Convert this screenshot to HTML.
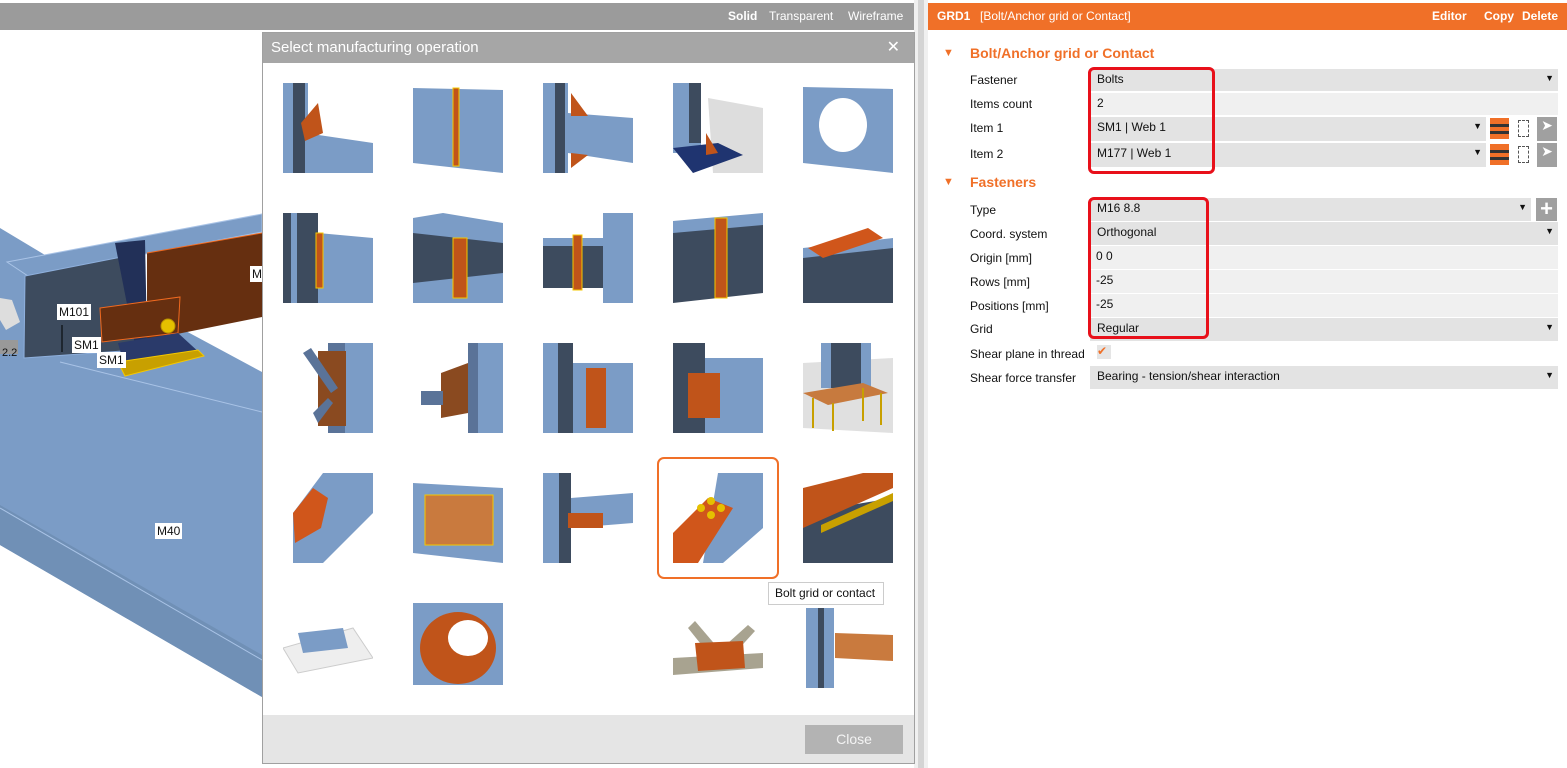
<!DOCTYPE html>
<html><head><meta charset="utf-8"><style>
*{margin:0;padding:0;box-sizing:border-box}
body{width:1567px;height:768px;overflow:hidden;background:#fff;font-family:"Segoe UI","Liberation Sans",sans-serif;font-size:12px;color:#111;position:relative}
.abs{position:absolute}
.topbar{left:0;top:3px;width:914px;height:27px;background:#9b9b9b;color:#fff}
.topbar span{position:absolute;top:6px;font-size:12px}
.dlg{left:262px;top:32px;width:653px;height:732px;background:#fff;border:1px solid #a0a0a0}
.dh{left:0;top:0;width:651px;height:30px;background:#a6a6a6;color:#fff;font-size:15px;padding:6px 8px}
.cell{position:absolute;width:90px;height:90px}
.lbl{position:absolute;background:#fff;font-family:"Liberation Sans",sans-serif;font-size:12px;padding:1px 2px;line-height:14px}
.rp{left:928px;top:0;width:639px;height:768px;background:#fff}
.row{position:absolute;left:970px;font-size:12px}
.fld{position:absolute;left:1090px;height:22px;background:#e3e3e3;padding:3px 7px;font-size:12px}
.dd::after{content:"▼";position:absolute;right:4px;top:4px;font-size:9px}
</style></head><body>
<!-- 3D view left -->
<svg class="abs" style="left:0;top:0" width="262" height="768">
<polygon points="0,228 50,258 262,372 262,697 0,545" fill="#7b9cc6"/>
<polygon points="0,505 262,655 262,697 0,545" fill="#7090b6"/>
<line x1="0" y1="508" x2="262" y2="660" stroke="#a9c3e6" stroke-width="1"/>
<line x1="60" y1="362" x2="262" y2="412" stroke="#a9c3e6" stroke-width="1"/>
<polygon points="7,262 262,214 262,232 28,276" fill="#7b9cc6" stroke="#a9c3e6"/>
<polygon points="25,276 137,254 137,350 24,358" fill="#3d4b5e" stroke="#8fb0dd"/>
<polygon points="115,243 145,240 147,340 135,345" fill="#223058"/>
<polygon points="147,253 262,233 262,317 177,334 147,340" fill="#662f10"/>
<line x1="147" y1="253" x2="262" y2="233" stroke="#f06a20"/>
<polygon points="100,308 180,297 178,333 102,342" fill="#662f10" stroke="#f06a20"/>
<polygon points="118,343 178,333 202,355 125,368" fill="#2a3a6a"/>
<polygon points="118,362 198,350 204,356 125,376" fill="#c8a000" stroke="#f5c800"/>
<circle cx="168" cy="326" r="7" fill="#e5c000" stroke="#b89000"/>
<polygon points="0,298 12,300 20,322 6,330 0,320" fill="#ddd"/>
<rect x="0" y="340" width="18" height="14" fill="#999"/>
<line x1="62" y1="325" x2="62" y2="352" stroke="#000"/>
</svg>
<div class="lbl" style="left:57px;top:304px">M101</div>
<div class="lbl" style="left:72px;top:337px">SM1</div>
<div class="lbl" style="left:97px;top:352px">SM1</div>
<div class="lbl" style="left:155px;top:523px">M40</div>
<div class="lbl" style="left:250px;top:266px">M</div>
<div class="abs" style="left:2px;top:347px;font-size:11px">2.2</div>

<div class="abs topbar"><span style="left:728px;font-weight:bold">Solid</span><span style="left:769px">Transparent</span><span style="left:848px">Wireframe</span></div>
<div class="abs" style="left:914px;top:0;width:14px;height:768px;background:#d4d4d4;border-left:4px solid #f0f0f0;border-right:4px solid #f0f0f0"></div>

<!-- dialog -->
<div class="abs dlg">
<div class="abs dh">Select manufacturing operation<span style="position:absolute;right:14px;top:4px;font-size:16px">✕</span></div>
<div class="abs" style="left:0;top:682px;width:651px;height:48px;background:#e5e5e5"></div>
<div class="abs" style="left:542px;top:692px;width:98px;height:29px;background:#b3b3b3;color:#f4f4f4;font-size:14px;text-align:center;line-height:29px">Close</div>
</div>
<div class="abs" style="left:657px;top:457px;width:122px;height:122px;border:2px solid #f07028;border-radius:7px"></div>
<div class="abs" style="left:768px;top:582px;width:116px;height:23px;border:1px solid #ccc;background:#fff;font-size:12px;padding:3px 6px">Bolt grid or contact</div>

<!-- thumbnails -->
<svg class="cell" style="left:283px;top:83px" viewBox="0 0 90 90"><rect x="0" y="0" width="25" height="90" fill="#7b9cc6"/><rect x="10" y="0" width="12" height="90" fill="#3d4b5e"/><polygon points="22,50 90,60 90,90 22,90" fill="#7b9cc6"/><polygon points="18,40 35,20 40,50 22,58" fill="#c0541a"/></svg>
<svg class="cell" style="left:413px;top:83px" viewBox="0 0 90 90"><polygon points="0,5 90,7 90,90 0,80" fill="#7b9cc6"/><rect x="40" y="5" width="6" height="78" fill="#c0541a" stroke="#f5c800"/></svg>
<svg class="cell" style="left:543px;top:83px" viewBox="0 0 90 90"><rect x="0" y="0" width="25" height="90" fill="#7b9cc6"/><rect x="12" y="0" width="10" height="90" fill="#3d4b5e"/><polygon points="25,30 90,35 90,80 25,70" fill="#7b9cc6"/><polygon points="28,10 45,33 28,33" fill="#c0541a"/><polygon points="28,70 45,72 28,85" fill="#c0541a"/></svg>
<svg class="cell" style="left:673px;top:83px" viewBox="0 0 90 90"><polygon points="35,15 90,25 90,90 40,90" fill="#ddd"/><rect x="0" y="0" width="28" height="70" fill="#7b9cc6"/><rect x="16" y="0" width="12" height="60" fill="#3d4b5e"/><polygon points="0,65 45,60 70,72 20,90" fill="#1f3470"/><polygon points="33,50 33,72 45,70" fill="#c0541a"/></svg>
<svg class="cell" style="left:803px;top:83px" viewBox="0 0 90 90"><polygon points="0,4 90,6 90,90 0,80" fill="#7b9cc6"/><ellipse cx="40" cy="42" rx="24" ry="27" fill="#fff"/></svg>

<svg class="cell" style="left:283px;top:213px" viewBox="0 0 90 90"><rect x="0" y="0" width="35" height="90" fill="#3d4b5e"/><rect x="8" y="0" width="6" height="90" fill="#7b9cc6"/><polygon points="35,20 90,25 90,90 35,90" fill="#7b9cc6"/><rect x="33" y="20" width="7" height="55" fill="#c0541a" stroke="#f5c800"/></svg>
<svg class="cell" style="left:413px;top:213px" viewBox="0 0 90 90"><polygon points="0,15 90,10 90,90 0,90" fill="#3d4b5e"/><polygon points="0,5 30,0 90,10 90,30 0,20" fill="#7b9cc6"/><polygon points="0,70 90,60 90,90 0,90" fill="#7b9cc6"/><rect x="40" y="25" width="14" height="60" fill="#c0541a" stroke="#f5c800"/></svg>
<svg class="cell" style="left:543px;top:213px" viewBox="0 0 90 90"><rect x="0" y="25" width="90" height="50" fill="#3d4b5e"/><rect x="0" y="25" width="90" height="8" fill="#7b9cc6"/><rect x="60" y="0" width="30" height="90" fill="#7b9cc6"/><rect x="30" y="22" width="9" height="55" fill="#c0541a" stroke="#f5c800"/></svg>
<svg class="cell" style="left:673px;top:213px" viewBox="0 0 90 90"><polygon points="0,15 90,8 90,80 0,90" fill="#3d4b5e"/><polygon points="0,8 90,0 90,12 0,20" fill="#7b9cc6"/><rect x="42" y="5" width="12" height="80" fill="#c0541a" stroke="#f5c800"/></svg>
<svg class="cell" style="left:803px;top:213px" viewBox="0 0 90 90"><polygon points="0,40 90,30 90,90 0,90" fill="#3d4b5e"/><polygon points="0,35 90,25 90,35 0,45" fill="#7b9cc6"/><polygon points="5,35 65,15 80,25 20,45" fill="#d0561b"/></svg>

<svg class="cell" style="left:283px;top:343px" viewBox="0 0 90 90"><rect x="45" y="0" width="45" height="90" fill="#5a7398"/><rect x="62" y="0" width="28" height="90" fill="#7b9cc6"/><rect x="35" y="8" width="28" height="75" fill="#8a4a20"/><polygon points="20,10 28,5 55,45 48,50" fill="#5a7398"/><polygon points="30,70 45,55 50,60 35,80" fill="#5a7398"/></svg>
<svg class="cell" style="left:413px;top:343px" viewBox="0 0 90 90"><rect x="55" y="0" width="35" height="90" fill="#5a7398"/><rect x="65" y="0" width="25" height="90" fill="#7b9cc6"/><polygon points="28,30 55,20 55,70 28,75" fill="#8a4a20"/><rect x="8" y="48" width="22" height="14" fill="#5a7398"/></svg>
<svg class="cell" style="left:543px;top:343px" viewBox="0 0 90 90"><rect x="0" y="0" width="20" height="90" fill="#7b9cc6"/><rect x="15" y="0" width="15" height="90" fill="#3d4b5e"/><rect x="30" y="20" width="60" height="70" fill="#7b9cc6"/><rect x="43" y="25" width="20" height="60" fill="#c0541a"/></svg>
<svg class="cell" style="left:673px;top:343px" viewBox="0 0 90 90"><rect x="0" y="0" width="32" height="90" fill="#3d4b5e"/><rect x="32" y="15" width="58" height="75" fill="#7b9cc6"/><rect x="15" y="30" width="32" height="45" fill="#c0541a"/></svg>
<svg class="cell" style="left:803px;top:343px" viewBox="0 0 90 90"><polygon points="0,20 90,15 90,90 0,85" fill="#e0e0e0"/><rect x="18" y="0" width="50" height="45" fill="#7b9cc6"/><rect x="28" y="0" width="30" height="45" fill="#3d4b5e"/><polygon points="0,50 60,40 85,50 25,62" fill="#c77a3e"/><g stroke="#c8a000" stroke-width="2"><line x1="10" y1="55" x2="10" y2="85"/><line x1="30" y1="60" x2="30" y2="88"/><line x1="60" y1="45" x2="60" y2="78"/><line x1="78" y1="50" x2="78" y2="82"/></g></svg>

<svg class="cell" style="left:283px;top:473px" viewBox="0 0 90 90"><polygon points="10,40 40,0 90,0 90,40 40,90 10,90" fill="#7b9cc6"/><polygon points="10,40 30,15 45,25 38,55 12,70" fill="#d0561b"/></svg>
<svg class="cell" style="left:413px;top:473px" viewBox="0 0 90 90"><polygon points="0,10 90,15 90,90 0,80" fill="#7b9cc6"/><rect x="12" y="22" width="68" height="50" fill="#c97a3e" stroke="#f5c800"/></svg>
<svg class="cell" style="left:543px;top:473px" viewBox="0 0 90 90"><rect x="0" y="0" width="28" height="90" fill="#7b9cc6"/><rect x="16" y="0" width="12" height="90" fill="#3d4b5e"/><polygon points="28,25 90,20 90,50 28,55" fill="#7b9cc6"/><rect x="25" y="40" width="35" height="15" fill="#c0541a"/></svg>
<svg class="cell" style="left:673px;top:473px" viewBox="0 0 90 90"><polygon points="45,0 90,0 90,55 50,90 30,90" fill="#7b9cc6"/><polygon points="0,60 35,25 60,35 25,90 0,90" fill="#d0561b"/><g fill="#e5c000"><circle cx="28" cy="35" r="4"/><circle cx="38" cy="42" r="4"/><circle cx="48" cy="35" r="4"/><circle cx="38" cy="28" r="4"/></g></svg>
<svg class="cell" style="left:803px;top:473px" viewBox="0 0 90 90"><polygon points="0,40 90,25 90,90 0,90" fill="#3d4b5e"/><polygon points="0,15 60,0 90,0 90,15 0,55" fill="#c0541a"/><polygon points="18,52 90,20 90,28 18,60" fill="#c8a000"/></svg>

<svg class="cell" style="left:283px;top:603px" viewBox="0 0 90 90"><polygon points="0,45 70,25 90,55 15,70" fill="#eee" stroke="#ccc"/><polygon points="15,30 60,25 65,45 20,50" fill="#7b9cc6"/></svg>
<svg class="cell" style="left:413px;top:603px" viewBox="0 0 90 90"><rect x="0" y="0" width="90" height="82" fill="#7b9cc6"/><ellipse cx="45" cy="45" rx="38" ry="36" fill="#c0541a"/><ellipse cx="55" cy="35" rx="20" ry="18" fill="#fff"/></svg>
<svg class="cell" style="left:673px;top:603px" viewBox="0 0 90 90"><polygon points="0,55 90,50 90,65 0,72" fill="#a8a390"/><polygon points="15,25 22,18 45,45 35,50" fill="#a8a390"/><polygon points="55,40 75,22 82,28 62,50" fill="#a8a390"/><polygon points="22,40 70,38 72,65 25,68" fill="#c0541a"/></svg>
<svg class="cell" style="left:803px;top:603px" viewBox="0 0 90 90"><rect x="3" y="5" width="28" height="80" fill="#7b9cc6"/><rect x="15" y="5" width="6" height="80" fill="#3d4b5e"/><polygon points="32,30 90,32 90,58 32,55" fill="#c97a3e"/></svg>

<!-- right panel -->
<div class="abs rp"></div>
<div class="abs" style="left:928px;top:3px;width:639px;height:27px;background:#f07028;color:#fff;font-size:12px">
<span style="position:absolute;left:9px;top:6px;font-weight:bold">GRD1</span><span style="position:absolute;left:52px;top:6px">[Bolt/Anchor grid or Contact]</span>
<span style="position:absolute;left:504px;top:6px;font-weight:bold">Editor</span><span style="position:absolute;left:556px;top:6px;font-weight:bold">Copy</span><span style="position:absolute;left:594px;top:6px;font-weight:bold">Delete</span></div>
<div class="abs" style="left:943px;top:47px;color:#f07028;font-size:11px">▼</div>
<div class="abs" style="left:970px;top:45px;color:#f07028;font-size:14px;font-weight:bold">Bolt/Anchor grid or Contact</div>
<div class="abs" style="left:943px;top:176px;color:#f07028;font-size:11px">▼</div>
<div class="abs" style="left:970px;top:174px;color:#f07028;font-size:14px;font-weight:bold">Fasteners</div>

<div class="row" style="top:73px">Fastener</div><div class="fld dd" style="top:69px;width:468px">Bolts</div>
<div class="row" style="top:97px">Items count</div><div class="fld" style="top:93px;width:468px;background:#f0f0f0">2</div>
<div class="row" style="top:121px">Item 1</div><div class="fld dd" style="top:117px;width:396px;height:24px">SM1 | Web 1</div>
<div class="row" style="top:147px">Item 2</div><div class="fld dd" style="top:143px;width:396px;height:24px">M177 | Web 1</div>
<div class="abs" style="left:1490px;top:118px;width:19px;height:21px;background:#f07028;border-top:5px solid #f07028"><div style="height:3px;background:#333;margin-top:1px"></div><div style="height:3px;background:#333;margin-top:4px"></div></div>
<div class="abs" style="left:1490px;top:144px;width:19px;height:21px;background:#f07028;border-top:5px solid #f07028"><div style="height:3px;background:#333;margin-top:1px"></div><div style="height:3px;background:#333;margin-top:4px"></div></div>
<div class="abs" style="left:1518px;top:120px;width:11px;height:17px;border:1px dashed #555"></div>
<div class="abs" style="left:1518px;top:146px;width:11px;height:17px;border:1px dashed #555"></div>
<div class="abs" style="left:1537px;top:117px;width:20px;height:24px;background:#a0a0a0;color:#fff;font-size:14px;text-align:center">➤</div>
<div class="abs" style="left:1537px;top:143px;width:20px;height:24px;background:#a0a0a0;color:#fff;font-size:14px;text-align:center">➤</div>

<div class="row" style="top:203px">Type</div><div class="fld dd" style="top:198px;width:441px;height:23px">M16 8.8</div>
<div class="abs" style="left:1536px;top:198px;width:21px;height:23px;background:#a0a0a0;color:#fff;font-size:22px;line-height:22px;text-align:center;font-weight:bold">+</div>
<div class="row" style="top:227px">Coord. system</div><div class="fld dd" style="top:222px;width:468px;height:23px">Orthogonal</div>
<div class="row" style="top:251px">Origin [mm]</div><div class="fld" style="top:246px;width:468px;height:23px;background:#f0f0f0;padding-left:6px">0 0</div>
<div class="row" style="top:275px">Rows [mm]</div><div class="fld" style="top:270px;width:468px;height:23px;background:#f0f0f0;padding-left:6px">-25</div>
<div class="row" style="top:299px">Positions [mm]</div><div class="fld" style="top:294px;width:468px;height:23px;background:#f0f0f0;padding-left:6px">-25</div>
<div class="row" style="top:322px">Grid</div><div class="fld dd" style="top:318px;width:468px;height:23px">Regular</div>
<div class="row" style="top:347px">Shear plane in thread</div><div class="abs" style="left:1097px;top:345px;width:14px;height:14px;background:#e5e5e5;color:#f07028;font-size:12px;line-height:12px">✔</div>
<div class="row" style="top:371px">Shear force transfer</div><div class="fld dd" style="top:366px;width:468px;height:23px">Bearing - tension/shear interaction</div>

<div class="abs" style="left:1088px;top:67px;width:127px;height:107px;border:3px solid #e8101a;border-radius:6px"></div>
<div class="abs" style="left:1088px;top:197px;width:121px;height:142px;border:3px solid #e8101a;border-radius:6px"></div>
</body></html>
